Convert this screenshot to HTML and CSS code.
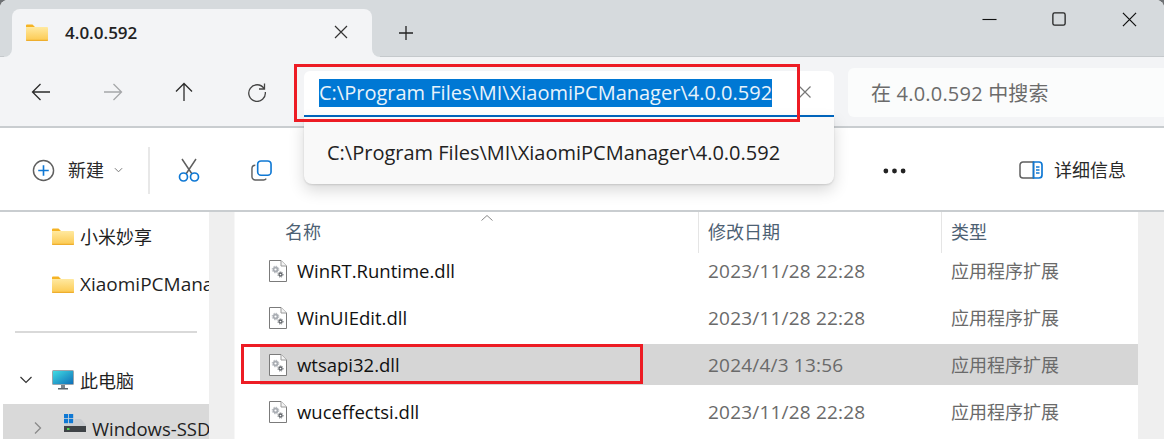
FILE: index.html
```html
<!DOCTYPE html>
<html lang="zh">
<head>
<meta charset="utf-8">
<title>4.0.0.592</title>
<link rel="stylesheet" href="styles.css">
</head>
<body>
<svg class="defs" width="0" height="0" aria-hidden="true">
  <defs>
    <linearGradient id="fg" x1="0" y1="0" x2="0" y2="1"><stop offset="0" stop-color="#ffe9a0"/><stop offset="1" stop-color="#fcc94f"/></linearGradient>
    <linearGradient id="mg" x1="0" y1="0" x2="1" y2="1"><stop offset="0" stop-color="#3fdbe3"/><stop offset="1" stop-color="#0f6fb8"/></linearGradient>
    <symbol id="folder" viewBox="0 0 22 17">
      <path d="M0 1.5A1 1 0 0 1 1 .5h5.5l2.5 2.5H0z" fill="#f5b324"/>
      <path d="M0 3h21a1 1 0 0 1 1 1v12a1 1 0 0 1-1 1H1a1 1 0 0 1-1-1z" fill="url(#fg)"/>
      <path d="M0 15.8h22V16a1 1 0 0 1-1 1H1a1 1 0 0 1-1-1z" fill="#eeae2e"/>
    </symbol>
    <symbol id="dll" viewBox="0 0 18 22">
      <path d="M.5.5h11.5l5.5 5.5v15.500H.5z" fill="#fff" stroke="#7b7b7b"/>
      <path d="M12 .5v5.500h5.500" fill="#f4f4f4" stroke="#9a9a9a"/>
      <circle cx="6.500" cy="9.500" r="2" fill="none" stroke="#a9adb3" stroke-width="1.800"/>
      <circle cx="6.500" cy="9.500" r="3.300" fill="none" stroke="#a9adb3" stroke-width="1" stroke-dasharray="1.300 1.300"/>
      <circle cx="11.500" cy="14.500" r="1.500" fill="none" stroke="#5f6368" stroke-width="1.300"/>
      <circle cx="11.500" cy="14.500" r="2.600" fill="none" stroke="#5f6368" stroke-width=".9" stroke-dasharray="1.100 1.100"/>
    </symbol>
  </defs>
</svg>
<div class="window">
  <header class="tabstrip">
    <div class="tab">
      <svg class="tab-folder"><use href="#folder"/></svg>
      <span class="tab-title">4.0.0.592</span>
      <svg class="tab-close" viewBox="0 0 14 14"><path d="M1 1l12 12M13 1L1 13"/></svg>
    </div>
    <svg class="tab-add" viewBox="0 0 14 14"><path d="M7 0v14M0 7h14"/></svg>
    <div class="caption">
      <svg class="cap cap-min" viewBox="0 0 16 16"><path d="M.500 8h15"/></svg>
      <svg class="cap cap-max" viewBox="0 0 16 16"><rect x="1" y="1" width="14" height="14" rx="2"/></svg>
      <svg class="cap cap-close" viewBox="0 0 16 16"><path d="M1 1l14 14M15 1L1 15"/></svg>
    </div>
  </header>

  <nav class="navbar">
    <svg class="nav-icon nav-back" viewBox="0 0 20 20"><path d="M19 10H1.500M9.500 2l-8 8 8 8"/></svg>
    <svg class="nav-icon nav-forward" viewBox="0 0 20 20"><path d="M1 10h17.500M10.500 2l8 8-8 8"/></svg>
    <svg class="nav-icon nav-up" viewBox="0 0 20 20"><path d="M10 19V1.500M2 9.500l8-8 8 8"/></svg>
    <svg class="nav-icon nav-refresh" viewBox="0 0 20 20"><path d="M17 6.500A8.300 8.300 0 1 0 18.300 10M17.500 1.500v5.500H12"/></svg>
    <div class="address">
      <span class="address-text">C:\Program Files\MI\XiaomiPCManager\4.0.0.592</span>
      <svg class="address-clear" viewBox="0 0 12 12"><path d="M.5.5l11 11M11.500.5l-11 11"/></svg>
    </div>
    <div class="search">在 4.0.0.592 中搜索</div>
  </nav>

  <section class="toolbar">
    <svg class="tb-new" viewBox="0 0 24 24"><circle cx="12" cy="12" r="10.500" class="s-grey"/><path d="M12 6.500v11M6.500 12h11" class="s-blue"/></svg>
    <span class="tb-label tb-new-label">新建</span>
    <svg class="tb-chevron" viewBox="0 0 10 6"><path d="M1 1l4 4 4-4"/></svg>
    <span class="tb-sep"></span>
    <svg class="tb-cut" viewBox="0 0 22 24"><path d="M4 1l10 15M18 1L8 16" class="s-grey"/><circle cx="5.500" cy="19" r="4" class="s-blue"/><circle cx="16.500" cy="19" r="4" class="s-blue"/></svg>
    <svg class="tb-copy" viewBox="0 0 22 22"><path d="M4.500 5.500A3.500 3.500 0 0 0 1 9v8.500A3.500 3.500 0 0 0 4.500 21H13a3.500 3.500 0 0 0 3-1.500" class="s-grey"/><rect x="7" y="1" width="14" height="15" rx="3.500" class="s-blue"/></svg>
    <svg class="tb-more" viewBox="0 0 24 6"><circle cx="3" cy="3" r="2.500"/><circle cx="12" cy="3" r="2.500"/><circle cx="21" cy="3" r="2.500"/></svg>
    <svg class="tb-details" viewBox="0 0 24 18"><path d="M14.500 1H4a3 3 0 0 0-3 3v10a3 3 0 0 0 3 3h10.500z" class="s-grey"/><path d="M14.500 1H20a3 3 0 0 1 3 3v10a3 3 0 0 1-3 3h-5.500zM17 6h3.500M17 9h3.500M17 12h3.500" class="s-blue"/></svg>
    <span class="tb-label">详细信息</span>
  </section>

  <main class="content">
    <aside class="sidebar">
      <div class="side-item"><svg class="side-folder"><use href="#folder"/></svg><span>小米妙享</span></div>
      <div class="side-item"><svg class="side-folder"><use href="#folder"/></svg><span>XiaomiPCManager</span></div>
      <div class="side-divider"></div>
      <div class="side-item side-pc">
        <svg class="side-chevron" viewBox="0 0 12 8"><path d="M.5 1L6 6.500 11.500 1"/></svg>
        <svg class="side-monitor" viewBox="0 0 22 20"><rect width="22" height="15" rx="1.500" fill="#9aa5ad"/><rect x="1" y="1" width="20" height="13" fill="url(#mg)"/><path d="M9 15h4v3H9z" fill="#7c858c"/><rect x="6" y="18" width="10" height="1.500" fill="#5c646b"/></svg>
        <span>此电脑</span>
      </div>
      <div class="side-item side-drive">
        <svg class="side-chevron-r" viewBox="0 0 8 12"><path d="M1 .5L6.500 6 1 11.500"/></svg>
        <svg class="side-disk" viewBox="0 0 22 18">
          <path d="M0 0h4.200v4.200H0zM5 0h4.200v4.200H5zM0 5h4.200v4.200H0zM5 5h4.200v4.200H5z" fill="#0f78d4"/>
          <path d="M11 5h6l5 6v1H0v-1l2-1h7z" fill="#c9ccd0"/>
          <rect y="12" width="22" height="6" fill="#3f4347"/>
          <rect x="3" y="14" width="2.500" height="2" fill="#4fd44f"/>
        </svg>
        <span>Windows-SSD</span>
      </div>
    </aside>
    <div class="track"></div>
    <section class="files">
      <svg class="sort" viewBox="0 0 12 6"><path d="M.5 5.500L6 .5l5.500 5"/></svg>
      <div class="file-head">
        <span class="col-name">名称</span>
        <span class="col-date">修改日期</span>
        <span class="col-type">类型</span>
      </div>
      <div class="file-row"><div class="col-file"><svg class="dll"><use href="#dll"/></svg><span>WinRT.Runtime.dll</span></div><span class="col-d">2023/11/28 22:28</span><span class="col-t">应用程序扩展</span></div>
      <div class="file-row"><div class="col-file"><svg class="dll"><use href="#dll"/></svg><span>WinUIEdit.dll</span></div><span class="col-d">2023/11/28 22:28</span><span class="col-t">应用程序扩展</span></div>
      <div class="file-row file-selected"><div class="col-file"><svg class="dll"><use href="#dll"/></svg><span>wtsapi32.dll</span></div><span class="col-d">2024/4/3 13:56</span><span class="col-t">应用程序扩展</span></div>
      <div class="file-row"><div class="col-file"><svg class="dll"><use href="#dll"/></svg><span>wuceffectsi.dll</span></div><span class="col-d">2023/11/28 22:28</span><span class="col-t">应用程序扩展</span></div>
    </section>
    <div class="track-right"></div>
  </main>

  <div class="suggest">C:\Program Files\MI\XiaomiPCManager\4.0.0.592</div>
  <div class="mark mark-address"></div>
  <div class="mark mark-file"></div>
</div>
</body>
</html>
```

FILE: styles.css
```css
* { box-sizing: border-box; }
html, body { margin: 0; height: 100%; overflow: hidden; background: #6f7275; }
body {
  font-family: "Open Sans", "Noto Sans", "Noto Sans CJK SC", sans-serif;
  color: #1a1a1a;
  font-size: 18px;
}
.defs { position: absolute; }
svg { display: block; flex: none; fill: none; }
.window {
  position: relative;
  width: 1164px;
  height: 439px;
  overflow: hidden;
  border-radius: 8px 8px 0 0;
  background: #fff;
  display: flex;
  flex-direction: column;
}

/* tab strip */
.tabstrip {
  flex: none;
  height: 57px;
  background: #d6dadd;
  border-bottom: 1px solid #c5c9cc;
  display: flex;
  align-items: flex-start;
  padding: 9px 0 0 12px;
}
.tab {
  position: relative;
  width: 360px;
  height: 48px;
  background: #f3f4f6;
  border-radius: 8px 8px 0 0;
  display: flex;
  align-items: center;
  padding: 0 24px 0 14px;
  margin-bottom: -1px;
}
.tab::before, .tab::after {
  content: "";
  position: absolute;
  bottom: 0;
  width: 8px;
  height: 8px;
  background: #d6dadd;
  z-index: 1;
}
.tab::before { left: -8px; border-radius: 0 0 8px 0; box-shadow: 3px 3px 0 3px #f3f4f6; }
.tab::after { right: -8px; border-radius: 0 0 0 8px; box-shadow: -3px 3px 0 3px #f3f4f6; }
.tab-folder { width: 22px; height: 17px; margin-top: -1px; }
.tab-title { margin-left: 17px; font-size: 17px; font-weight: 600; color: #222; margin-top: -1px; }
.tab-close { width: 14px; height: 14px; margin-left: auto; margin-top: -2px; stroke: #333; stroke-width: 1.200; }
.tab-add { width: 14px; height: 14px; margin: 17px 0 0 27px; stroke: #222; stroke-width: 1.300; }
.caption { margin-left: auto; display: flex; padding: 3px 0 0 0; }
.cap { width: 15px; height: 15px; stroke: #111; stroke-width: 1.300; }
.cap-min { margin-right: 55px; stroke-width: 1.200; }
.cap-max { width: 14px; height: 14px; margin-right: 56px; stroke: #222; stroke-width: 1.500; }
.cap-close { margin-right: 27px; }

/* navigation */
.navbar {
  flex: none;
  height: 71px;
  background: #f3f4f6;
  border-bottom: 2px solid #c9cdd0;
  display: flex;
  align-items: flex-start;
  position: relative;
}
.nav-icon { width: 20px; height: 20px; margin-top: 25px; stroke: #2b2b2b; stroke-width: 1.300; }
.nav-back { margin-left: 31px; }
.nav-forward { margin-left: 52px; stroke: #a5a7a9; }
.nav-up { margin-left: 51px; }
.nav-refresh { margin-left: 53px; stroke: #444; }
.address {
  width: 530px;
  height: 47px;
  margin: 14px 0 0 37px;
  background: #fff;
  border-radius: 6px 6px 0 0;
  border-bottom: 3px solid #0067c0;
  display: flex;
  align-items: center;
  padding: 0 23px 0 15px;
  justify-content: space-between;
}
.address-text {
  background: #0078d4;
  color: #e8f3fb;
  height: 28px;
  line-height: 28px;
  font-size: 20px;
  white-space: nowrap;
}
.address-clear { width: 12px; height: 12px; stroke: #777; stroke-width: 1.200; margin-top: -2px; }
.search {
  width: 316px;
  height: 49px;
  margin: 11px 0 0 14px;
  background: #fbfcfc;
  border-radius: 6px 0 0 6px;
  padding-left: 23px;
  line-height: 51px;
  font-size: 20px;
  letter-spacing: .2px;
  color: #6b6b6b;
}

/* command bar */
.toolbar {
  flex: none;
  height: 84px;
  background: #fff;
  border-bottom: 2px solid #c9cdd0;
  display: flex;
  align-items: center;
  padding: 2px 0 0 32px;
}
.s-grey { stroke: #5f5f5f; stroke-width: 1.500; }
.s-blue { stroke: #0f78d4; stroke-width: 1.700; }
.tb-new { width: 23px; height: 23px; }
.tb-label { font-size: 18px; color: #2a2a2a; margin-top: -2px; }
.tb-new-label { margin-left: 13px; }
.tb-chevron { width: 9px; height: 6px; margin-left: 10px; stroke: #777; stroke-width: 1.100; }
.tb-sep { width: 2px; height: 47px; margin-left: 25px; background: #e8e8e8; }
.tb-cut { width: 22px; height: 24px; margin-left: 28px; }
.tb-copy { width: 21px; height: 21px; margin-left: 51px; }
.tb-more { width: 23px; height: 6px; margin-left: 611px; fill: #222; margin-top: 2px; }
.tb-details { width: 24px; height: 18px; margin-left: 113px; margin-right: 11px; }

/* main */
.content { flex: 1; min-height: 0; display: flex; }
.sidebar {
  flex: none;
  width: 209px;
  background: #fff;
  overflow: hidden;
}
.side-item {
  height: 48px;
  display: flex;
  align-items: center;
  padding-left: 52px;
  font-size: 19px;
  white-space: nowrap;
  color: #1f1f1f;
}
.side-item span { margin-left: 6px; }
.side-item:first-child { font-size: 18px; }
.side-folder { width: 22px; height: 17px; }
.side-divider { height: 2px; margin: 23px 12px 23px 15px; background: #d9d9d9; }
.side-pc { padding-left: 20px; font-size: 18px; margin-bottom: 1px; }
.side-chevron { width: 12px; height: 8px; margin-right: 20px; stroke: #333; stroke-width: 1.200; }
.side-monitor { width: 22px; height: 20px; }
.side-drive {
  height: 36px;
  margin: -1px 0 0 3px;
  padding-left: 31px;
  padding-top: 12px;
  background: #d9d9d9;
  font-size: 18.500px;
}
.side-chevron-r { width: 8px; height: 12px; margin-right: 22px; stroke: #8a8a8a; stroke-width: 1.300; }
.side-disk { width: 22px; height: 18px; margin-top: -11px; }
.track { flex: none; width: 26px; background: #efefef; border-right: 1px solid #f7f7f7; }
.files { position: relative; flex: 1; min-width: 0; background: #fff; }
.sort { position: absolute; left: 246px; top: 3px; width: 12px; height: 6px; stroke: #888; stroke-width: 1; }
.file-head {
  height: 38px;
  display: grid;
  grid-template-columns: 463px 243px 1fr;
  font-size: 18px;
  color: #4d6173;
  line-height: 41px;
  margin-bottom: -2px;
}
.col-name { padding-left: 50px; }
.col-date { padding-left: 9px; border-left: 1px solid #e5e5e5; }
.col-type { padding-left: 9px; border-left: 1px solid #e5e5e5; }
.file-row {
  height: 41px;
  margin: 0 0 6px 25px;
  position: relative;
  top: 2px;
  display: grid;
  grid-template-columns: 438px 243px 1fr;
  align-items: center;
  font-size: 18px;
  color: #6a6a6a;
}
.file-selected { background: #d6d6d6; }
.col-file { display: flex; align-items: center; color: #111; padding-left: 9px; font-size: 18.500px; }
.col-file span { margin-left: 10px; }
.dll { width: 18px; height: 22px; }
.col-d { padding-left: 10px; font-size: 19px; letter-spacing: .2px; }
.col-t { padding-left: 10px; margin-top: -1px; }
.track-right { flex: none; width: 26px; background: #efefef; }

/* overlays */
.suggest {
  position: absolute;
  left: 304px;
  top: 117px;
  width: 530px;
  height: 67px;
  padding: 0 0 0 23px;
  line-height: 71px;
  font-size: 20px;
  color: #222;
  background: #f9f9f9;
  border-radius: 0 0 8px 8px;
  box-shadow: 0 6px 16px rgba(0,0,0,.16), 0 1px 2px rgba(0,0,0,.12);
}
.mark { position: absolute; border: 3px solid #ed1c24; pointer-events: none; }
.mark-address { left: 294px; top: 64px; width: 506px; height: 58px; }
.mark-file { left: 241px; top: 344px; width: 402px; height: 40px; }
```
